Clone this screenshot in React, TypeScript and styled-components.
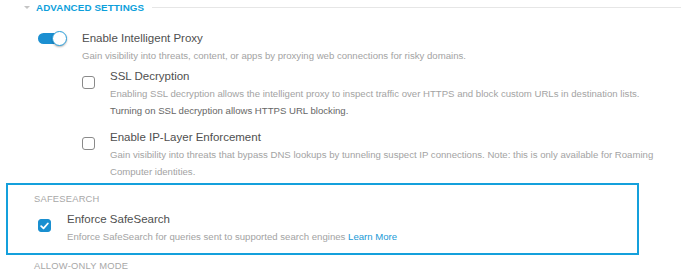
import React from "react";
import styled, { createGlobalStyle } from "styled-components";

const Global = createGlobalStyle`
  html, body { margin: 0; padding: 0; background: #fff; }
  body { font-family: "Liberation Sans", Arial, sans-serif; overflow: hidden; }
`;

const Page = styled.div`
  width: 681px;
  height: 272px;
  overflow: hidden;
  display: flex;
  flex-direction: column;
`;

const Header = styled.div`
  display: flex;
  align-items: center;
  height: 16px;
  padding-top: 2px;
  padding-left: 24px;
`;

const Caret = styled.span`
  width: 0;
  height: 0;
  border-left: 3px solid transparent;
  border-right: 3px solid transparent;
  border-top: 3px solid #c4c4c4;
  margin-right: 6px;
`;

const HeaderTitle = styled.span`
  color: #0d9fdb;
  font-weight: bold;
  font-size: 9.8px;
  letter-spacing: 0.1px;
  margin-right: 8px;
`;

const HeaderRule = styled.div`
  flex: 1;
  height: 1px;
  background: #e6e6e6;
`;

const Item = styled.div<{ $indent: number; $top: number; $ctl: number }>`
  display: grid;
  grid-template-columns: ${(p) => p.$ctl}px 1fr;
  padding-left: ${(p) => p.$indent}px;
  padding-right: 8px;
  margin-top: ${(p) => p.$top}px;
`;

const Title = styled.div`
  font-size: 11.5px;
  line-height: 17px;
  color: #4f4f4f;
`;

const Desc = styled.div<{ $dark?: boolean }>`
  font-size: 9.6px;
  line-height: 17px;
  color: ${(p) => (p.$dark ? "#666" : "#a3a3a3")};
`;

const Toggle = styled.div`
  position: relative;
  width: 28px;
  height: 14px;
  margin-top: 1px;
`;

const Track = styled.div`
  position: absolute;
  left: 0;
  top: 2px;
  width: 24px;
  height: 11px;
  border-radius: 6px;
  background: #1b8fd1;
`;

const Knob = styled.div`
  position: absolute;
  left: 14px;
  top: 0;
  width: 13px;
  height: 13px;
  border-radius: 50%;
  background: #fff;
  border: 1.5px solid #2aa0dc;
  box-shadow: 0 1px 2px rgba(0, 0, 0, 0.3);
`;

const Box = styled.div<{ $checked?: boolean }>`
  width: 13px;
  height: 13px;
  box-sizing: border-box;
  border-radius: 3px;
  margin-top: 8px;
  border: 1px solid ${(p) => (p.$checked ? "#1a8fd0" : "#8a8a8a")};
  background: ${(p) => (p.$checked ? "#1a8fd0" : "#fff")};
  display: flex;
  align-items: center;
  justify-content: center;
`;

const Highlight = styled.div`
  margin: 3px 0 0 6px;
  width: 633px;
  box-sizing: border-box;
  border: 2px solid #14a0dc;
  padding: 7px 0 8px 0;
`;

const SectionLabel = styled.div<{ $pad: number; $top?: number }>`
  font-size: 9.4px;
  line-height: 14px;
  color: #a8a8a8;
  letter-spacing: 0.2px;
  padding-left: ${(p) => p.$pad}px;
  margin-top: ${(p) => p.$top ?? 0}px;
`;

const Link = styled.a`
  color: #1a9ad6;
  text-decoration: none;
`;

const Check = () => (
  <svg width="9" height="8" viewBox="0 0 9 8">
    <path d="M1.2 4.2 L3.5 6.3 L7.8 1.5" fill="none" stroke="#fff" strokeWidth="1.8" strokeLinecap="round" strokeLinejoin="round" />
  </svg>
);

export default function App() {
  return (
    <Page>
      <Global />
      <Header>
        <Caret />
        <HeaderTitle>ADVANCED SETTINGS</HeaderTitle>
        <HeaderRule />
      </Header>
      <Item $indent={38} $top={17} $ctl={44}>
        <Toggle>
          <Track />
          <Knob />
        </Toggle>
        <div>
          <Title>Enable Intelligent Proxy</Title>
          <Desc>Gain visibility into threats, content, or apps by proxying web connections for risky domains.</Desc>
        </div>
      </Item>
      <Item $indent={82} $top={4} $ctl={28}>
        <Box />
        <div>
          <Title>SSL Decryption</Title>
          <Desc>Enabling SSL decryption allows the intelligent proxy to inspect traffic over HTTPS and block custom URLs in destination lists.</Desc>
          <Desc $dark>Turning on SSL decryption allows HTTPS URL blocking.</Desc>
        </div>
      </Item>
      <Item $indent={82} $top={10} $ctl={28}>
        <Box />
        <div>
          <Title>Enable IP-Layer Enforcement</Title>
          <Desc>Gain visibility into threats that bypass DNS lookups by tunneling suspect IP connections. Note: this is only available for Roaming Computer identities.</Desc>
        </div>
      </Item>
      <Highlight>
        <SectionLabel $pad={26}>SAFESEARCH</SectionLabel>
        <Item $indent={30} $top={5} $ctl={29}>
          <Box $checked>
            <Check />
          </Box>
          <div>
            <Title>Enforce SafeSearch</Title>
            <Desc>
              Enforce SafeSearch for queries sent to supported search engines <Link href="#">Learn More</Link>
            </Desc>
          </div>
        </Item>
      </Highlight>
      <SectionLabel $pad={34} $top={4}>ALLOW-ONLY MODE</SectionLabel>
    </Page>
  );
}
